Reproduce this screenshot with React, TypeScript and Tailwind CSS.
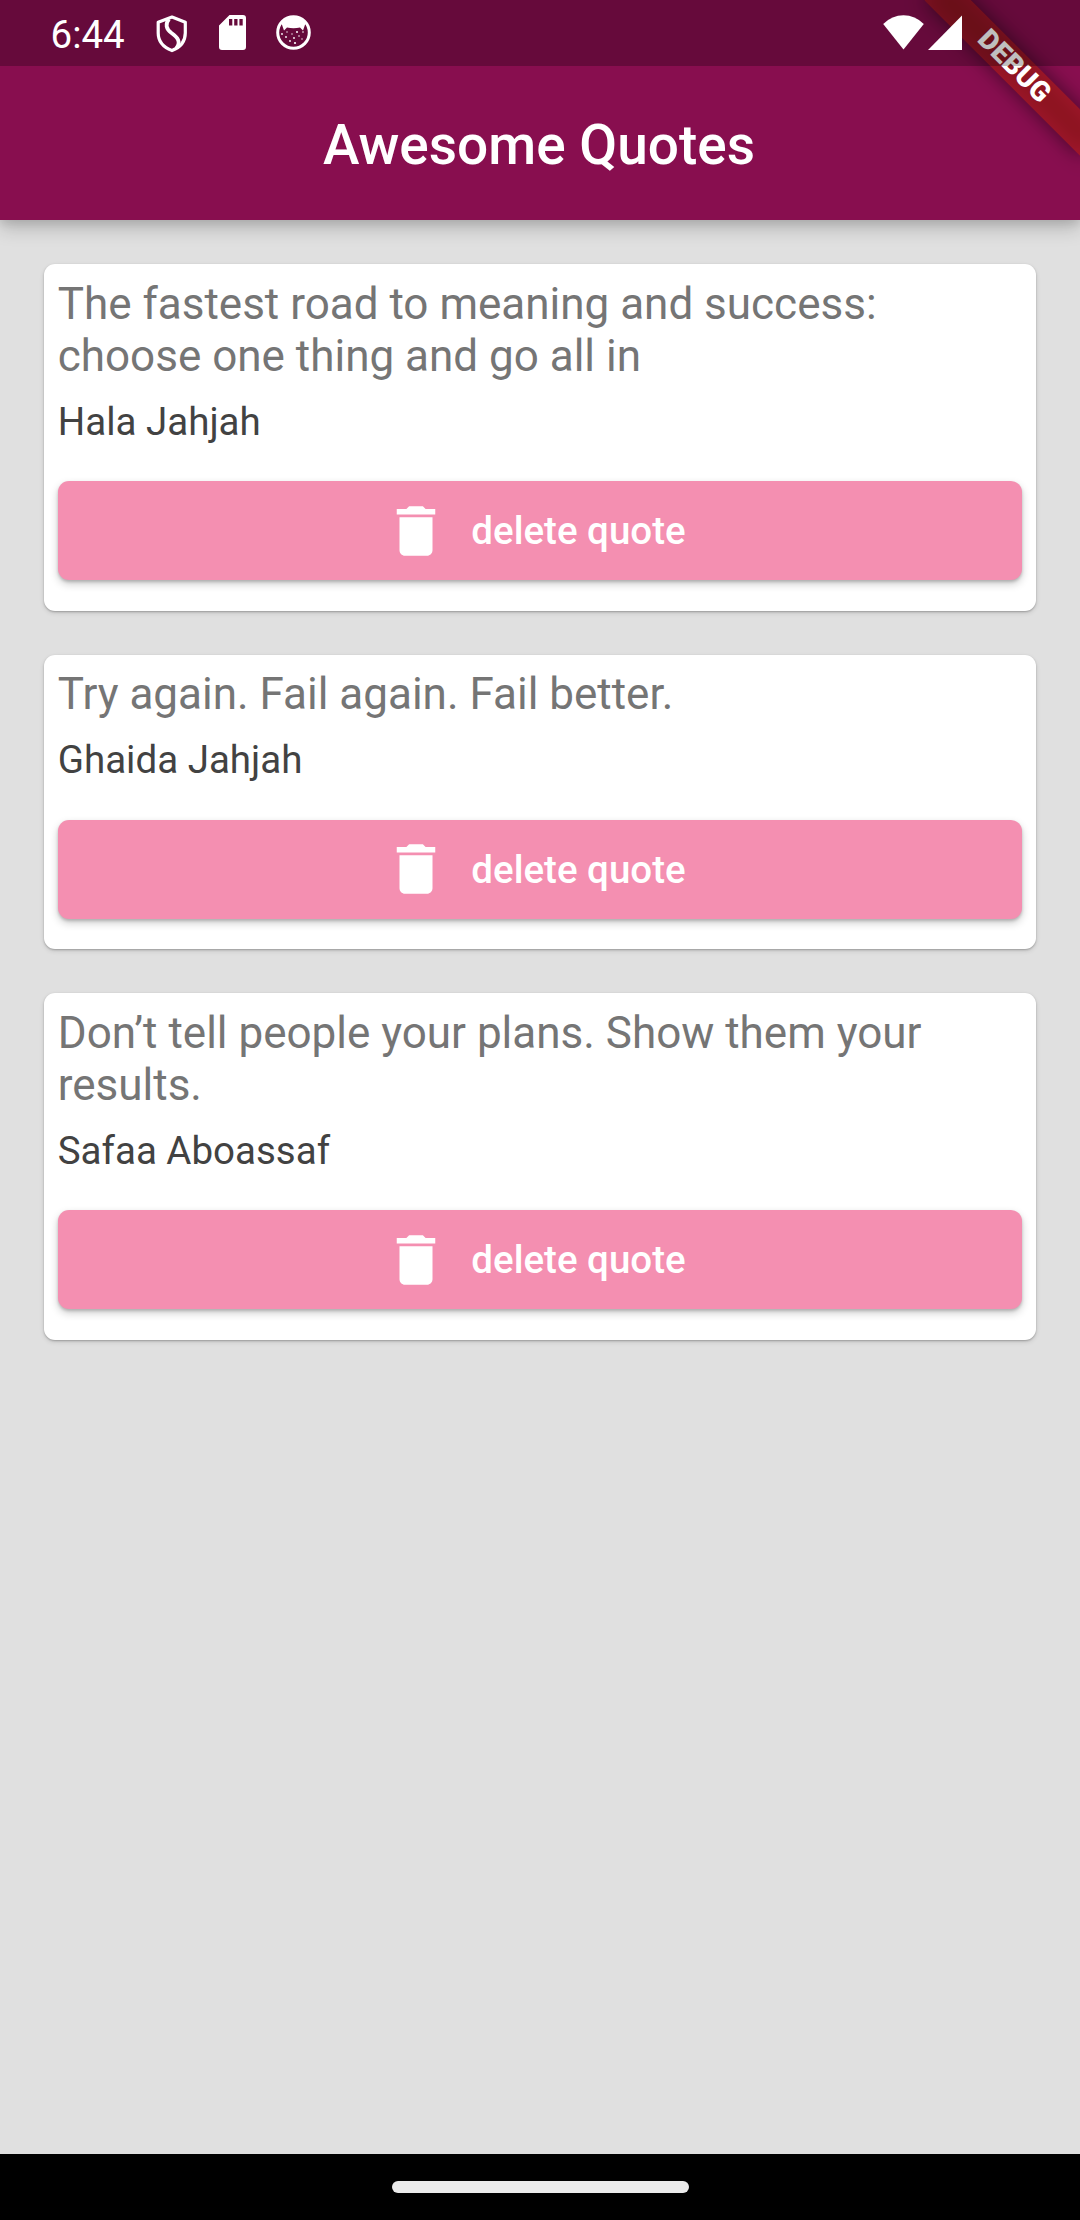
import React from "react";

const quotes = [
  { text: "The fastest road to meaning and success: choose one thing and go all in", author: "Hala Jahjah" },
  { text: "Try again. Fail again. Fail better.", author: "Ghaida Jahjah" },
  { text: "Don’t tell people your plans. Show them your results.", author: "Safaa Aboassaf" },
];

function ShieldIcon() {
  return (
    <svg className="ml-[31px] h-[38px] w-[32px]" viewBox="0 0 32 38" fill="none" stroke="white" strokeWidth="3.2" strokeLinejoin="round">
      <path d="M16 2 L29.3 7.3 V18 C29.3 26.5 24 32.5 16 35.6 C8 32.5 2.2 26.5 2.2 18 V7.3 Z" />
      <path d="M13 4 C9 9 10 14 15.5 18 C22 22.5 25 27 20.5 33" strokeWidth="3.8" />
    </svg>
  );
}

function SdCardIcon() {
  return (
    <svg className="ml-[31px] h-[35px] w-[27px]" viewBox="0 0 27 35" fill="white">
      <path
        fillRule="evenodd"
        d="M10.5 0 H24 a3 3 0 0 1 3 3 V32 a3 3 0 0 1 -3 3 H3 a3 3 0 0 1 -3 -3 V10.5 Z M10 4 V10.5 H13.3 V4 Z M15.2 4 V10.5 H18.5 V4 Z M20.4 4 V10.5 H23.7 V4 Z"
      />
    </svg>
  );
}

function CatIcon() {
  return (
    <svg className="ml-[30px] h-[35px] w-[35px]" viewBox="0 0 35 35">
      <circle cx="17.5" cy="17.5" r="15.8" fill="none" stroke="white" strokeWidth="3" />
      <path d="M5 7 Q17.5 -4 30 7 L27 15.5 L24 12.5 Q17.5 14 11 12.5 L8 15.5 Z" fill="white" />
      <g fill="white">
        <circle cx="6" cy="19" r="0.9" /><circle cx="11" cy="17" r="0.7" /><circle cx="21" cy="17" r="1" />
        <circle cx="27" cy="17" r="0.8" /><circle cx="10" cy="22" r="0.9" /><circle cx="16" cy="19" r="0.7" />
        <circle cx="23" cy="21" r="0.8" /><circle cx="19" cy="28" r="1.1" /><circle cx="14" cy="26" r="0.9" />
        <circle cx="18" cy="23" r="0.9" /><circle cx="26" cy="24" r="0.7" />
      </g>
    </svg>
  );
}

function StatusBar() {
  return (
    <div className="absolute inset-x-0 top-0 z-20 flex h-[66px] items-start bg-black/25">
      <div className="ml-[50.5px] mt-[12px] w-[74.5px] text-[38.5px] leading-[45px] text-white">6:44</div>
      <div className="mt-[15px] flex items-start">
        <ShieldIcon />
        <SdCardIcon />
        <CatIcon />
      </div>
      <svg className="ml-auto mr-[117px] mt-[15px] h-[35px] w-[80px]" viewBox="0 0 80 35" fill="white">
        <path d="M0.2 9 Q9 0.3 20.5 0.3 Q32 0.3 40.8 9 L20.5 34.5 Z" />
        <path d="M45 35 L79 0.5 V35 Z" />
      </svg>
    </div>
  );
}

function DebugBanner() {
  return (
    <div className="absolute left-[904px] top-[50px] z-10 h-[33px] w-[220px] rotate-45">
      <div className="absolute inset-0 bg-black/50 blur-[10px]" />
      <div className="absolute inset-0 bg-[#b71c1c]/63" />
      <div className="relative text-center text-[28px] font-black leading-[31px] text-white">DEBUG</div>
    </div>
  );
}

function QuoteCard({ text, author }: { text: string; author: string }) {
  return (
    <section className="rounded-[11px] bg-white px-[13.75px] pb-[30.25px] pt-[13.75px] shadow-[0_1px_2px_rgba(0,0,0,0.24),0_2px_5px_rgba(0,0,0,0.12)]">
      <p className="text-[44px] leading-[52px] text-[#757575]">{text}</p>
      <p className="mt-[17px] text-[38.5px] leading-[46px] text-[#424242]">{author}</p>
      <button className="mt-[36.5px] flex h-[99px] w-full items-center justify-center gap-[22px] rounded-[11px] bg-[#f48fb1] pr-[11px] text-white shadow-[0_2px_3px_rgba(0,0,0,0.18),0_4px_8px_rgba(0,0,0,0.2)]">
        <svg className="h-[66px] w-[66px]" viewBox="0 0 24 24" fill="white">
          <path d="M6 19c0 1.1.9 2 2 2h8c1.1 0 2-.9 2-2V7H6v12zM19 4h-3.5l-1-1h-5l-1 1H5v2h14V4z" />
        </svg>
        <span className="text-[38.5px] font-medium leading-[45px]">delete quote</span>
      </button>
    </section>
  );
}

export default function App() {
  return (
    <div className="relative flex h-[2220px] w-[1080px] flex-col overflow-hidden bg-[#e0e0e0] font-['Roboto',sans-serif]">
      <StatusBar />
      <DebugBanner />
      <header className="flex h-[220px] items-center justify-center bg-[#880e4f] pr-[2px] pt-[69px] shadow-[0_4px_8px_rgba(0,0,0,0.08),0_8px_18px_rgba(0,0,0,0.2)]">
        <h1 className="text-[55px] font-medium leading-[64px] text-white">Awesome Quotes</h1>
      </header>
      <main className="flex grow flex-col gap-[44px] px-[44px] pt-[44px]">
        {quotes.map((quote) => (
          <QuoteCard key={quote.author} text={quote.text} author={quote.author} />
        ))}
      </main>
      <footer className="flex h-[66px] items-start justify-center bg-black pt-[27px]">
        <div className="h-[12px] w-[297px] rounded-full bg-[#ebebeb]" />
      </footer>
    </div>
  );
}
